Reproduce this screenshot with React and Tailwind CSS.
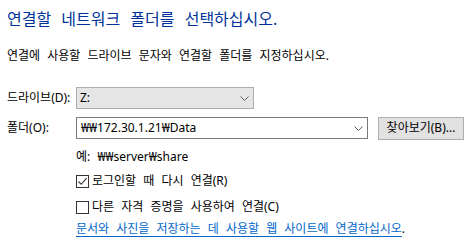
import React from 'react';

const Chevron = () => (
  <svg width="9" height="5" viewBox="0 0 9 5" className="block">
    <path d="M0.5 0.5 L4.5 4.5 L8.5 0.5" fill="none" stroke="#606060" strokeWidth="1" />
  </svg>
);

const Checkbox = ({ checked }) => (
  <span className="w-[13px] h-[13px] border border-[#333333] bg-white flex items-center justify-center shrink-0">
    {checked && (
      <svg width="11" height="11" viewBox="0 0 11 11" className="block">
        <path d="M1.5 5.5 L4.2 8.3 L9.6 2.2" fill="none" stroke="#333333" strokeWidth="1.1" />
      </svg>
    )}
  </span>
);

const App = () => {
  return (
    <div
      className="w-[475px] h-[252px] bg-white overflow-hidden pl-[7px] pt-[9px] text-[12px] text-black [word-spacing:4px]"
      style={{ fontFamily: '"Noto Sans", "Noto Sans CJK KR", sans-serif' }}
    >
      {/* Main instruction */}
      <div className="h-[20px] leading-[20px] text-[16px] text-[#003399] [word-spacing:6px]">
        연결할 네트워크 폴더를 선택하십시오.
      </div>

      <div className="mt-[19px] h-[16px] leading-[16px]">
        연결에 사용할 드라이브 문자와 연결할 폴더를 지정하십시오.
      </div>

      {/* Drive */}
      <div className="mt-[23px] flex items-center h-[22px]">
        <span className="w-[69px] leading-[16px]">드라이브(D):</span>
        <div className="w-[178px] h-[22px] bg-[#e5e5e5] border border-[#adadad] flex items-center justify-between pl-[3px] pr-[4px]">
          <span className="leading-[16px]">Z:</span>
          <Chevron />
        </div>
      </div>

      {/* Folder */}
      <div className="mt-[8px] flex items-center h-[22px]">
        <span className="w-[69px] leading-[16px]">폴더(O):</span>
        <div className="w-[292px] h-[22px] bg-white border border-[#7a7a7a] flex items-center justify-between pl-[4px] pr-[4px]">
          <span className="leading-[16px]">₩₩172.30.1.21₩Data</span>
          <Chevron />
        </div>
        <button className="ml-[10px] w-[86px] h-[23px] bg-[#e1e1e1] border border-[#adadad] leading-[16px] text-black">
          찾아보기(B)...
        </button>
      </div>

      <div className="ml-[69px]">
        <div className="mt-[10px] h-[16px] leading-[16px]">예: ₩₩server₩share</div>

        <div className="mt-[8px] h-[16px] flex items-center gap-[3px]">
          <Checkbox checked />
          <span className="leading-[16px]">로그인할 때 다시 연결(R)</span>
        </div>

        <div className="mt-[10px] h-[16px] flex items-center gap-[3px]">
          <Checkbox />
          <span className="leading-[16px]">다른 자격 증명을 사용하여 연결(C)</span>
        </div>

        <div className="mt-[6px] h-[16px] leading-[16px]">
          <span className="text-[#0066cc] underline underline-offset-[3px]">
            문서와 사진을 저장하는 데 사용할 웹 사이트에 연결하십시오
          </span>
          .
        </div>
      </div>
    </div>
  );
};

export default App;
